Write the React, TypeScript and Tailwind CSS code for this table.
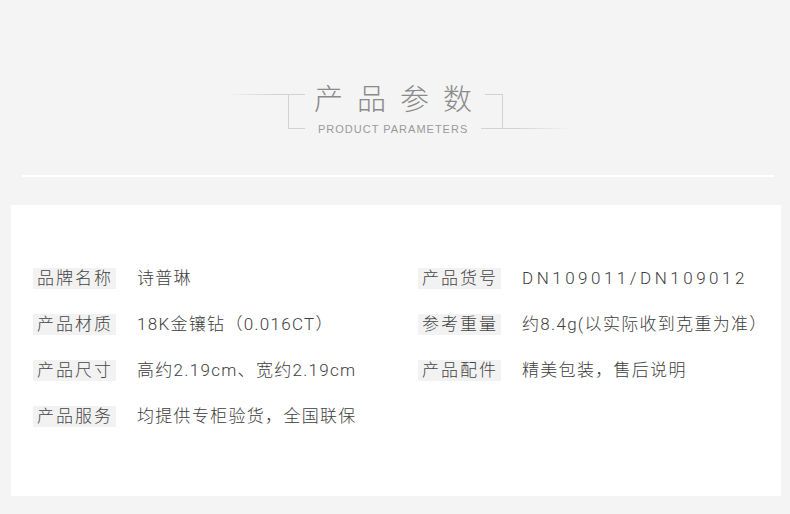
import React from "react"

const font = "font-['Liberation_Sans','Noto_Sans_CJK_SC',sans-serif]"
const valueFont = "font-['Roboto','Noto_Sans_CJK_SC',sans-serif]"

type Item = { label: string; value: string; wide?: boolean }

const rows: (Item | null)[][] = [
  [
    { label: "品牌名称", value: "诗普琳" },
    { label: "产品货号", value: "DN109011/DN109012", wide: true },
  ],
  [
    { label: "产品材质", value: "18K金镶钻（0.016CT）" },
    { label: "参考重量", value: "约8.4g(以实际收到克重为准）" },
  ],
  [
    { label: "产品尺寸", value: "高约2.19cm、宽约2.19cm" },
    { label: "产品配件", value: "精美包装，售后说明" },
  ],
  [{ label: "产品服务", value: "均提供专柜验货，全国联保" }, null],
]

function Param({ item }: { item: Item }) {
  return (
    <div className="flex items-center h-[21px]">
      <div className="w-[83px] h-[21px] bg-[#f2f2f2] pl-[4px] flex items-center text-[17px] leading-none tracking-[2px] text-[#444] font-light whitespace-nowrap">
        {item.label}
      </div>
      <div
        className={`ml-[21px] text-[17px] leading-none text-[#3d3d3d] font-light whitespace-nowrap ${valueFont} ${
          item.wide ? "tracking-[3.5px]" : "tracking-[1.3px]"
        }`}
      >
        {item.value}
      </div>
    </div>
  )
}

export default function App() {
  return (
    <div className={`w-[790px] h-[514px] bg-[#f4f4f4] flex flex-col overflow-hidden ${font}`}>
      {/* Title with bracket lines */}
      <div className="flex justify-center pt-[86px] pl-[7px]">
        <svg width="78" height="35" viewBox="0 0 78 35" className="mt-[8px] shrink-0">
          <defs>
            <linearGradient id="fadeL" x1="0" x2="1" y1="0" y2="0">
              <stop offset="0" stopColor="#d2d2d2" stopOpacity="0" />
              <stop offset="0.6" stopColor="#d2d2d2" stopOpacity="1" />
            </linearGradient>
          </defs>
          <rect x="0" y="0" width="78" height="1" fill="url(#fadeL)" />
          <rect x="61" y="0" width="1" height="35" fill="#d2d2d2" />
          <rect x="61" y="34" width="17" height="1" fill="#d2d2d2" />
        </svg>
        <div className="w-[176px] shrink-0">
          <div className="pl-[9px] text-[29px] leading-[29px] tracking-[14px] text-[#8a8a8a] font-light whitespace-nowrap">
            产品参数
          </div>
          <div className="pl-[13px] mt-[9px] text-[11px] leading-[11px] tracking-[1px] text-[#9a9a9a] whitespace-nowrap">
            PRODUCT PARAMETERS
          </div>
        </div>
        <svg width="89" height="35" viewBox="0 0 89 35" className="mt-[8px] shrink-0">
          <defs>
            <linearGradient id="fadeR" x1="0" x2="1" y1="0" y2="0">
              <stop offset="0.4" stopColor="#d2d2d2" stopOpacity="1" />
              <stop offset="1" stopColor="#d2d2d2" stopOpacity="0" />
            </linearGradient>
          </defs>
          <rect x="4" y="0" width="17" height="1" fill="#d2d2d2" />
          <rect x="21" y="0" width="1" height="35" fill="#d2d2d2" />
          <rect x="0" y="34" width="89" height="1" fill="url(#fadeR)" />
        </svg>
      </div>

      {/* Divider */}
      <div className="ml-[22px] w-[752px] h-[2px] bg-white mt-[40px]" />

      {/* Parameters card */}
      <div className="ml-[11px] w-[770px] h-[291px] bg-white mt-[28px] pt-[63px] pl-[22px]">
        <div className="grid grid-cols-[385px_1fr] gap-y-[25px]">
          {rows.map((row, i) =>
            row.map((item, j) =>
              item ? <Param key={`${i}-${j}`} item={item} /> : <div key={`${i}-${j}`} />
            )
          )}
        </div>
      </div>
    </div>
  )
}
